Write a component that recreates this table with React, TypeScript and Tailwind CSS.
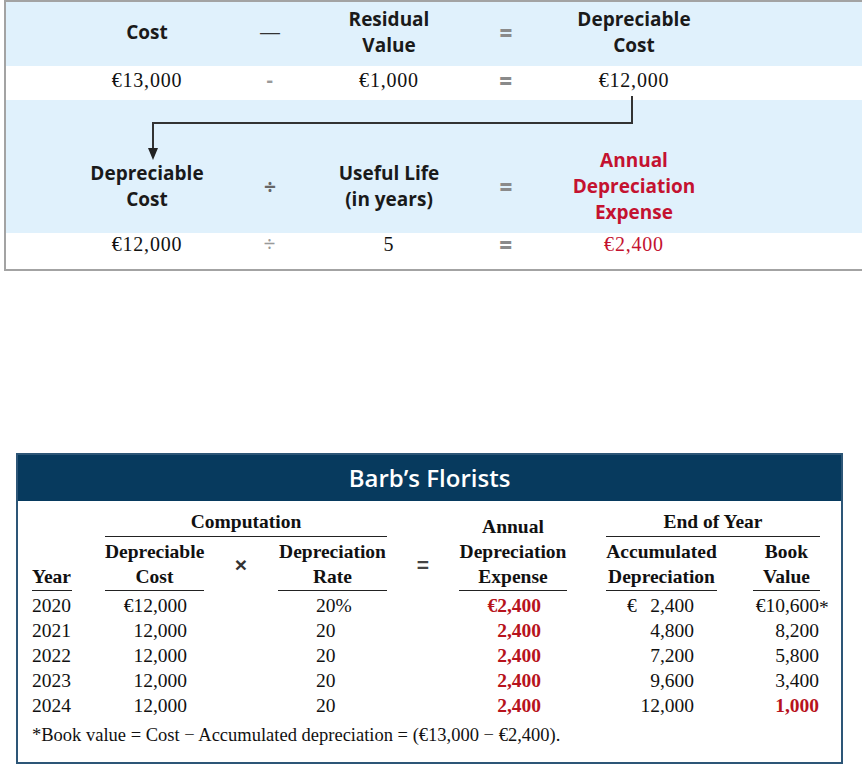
import React from "react";

const sans = "font-['Open_Sans',sans-serif]";
const serif = "font-['Liberation_Serif',serif]";

// top formula box: five centred columns
const topCols = "grid grid-cols-[122px_124px_114px_120px_136px] pl-[80px] text-center";
// bottom schedule columns
const tableCols =
  "grid grid-cols-[40px_33px_99px_74px_109px_72px_108px_39px_111px_36px_67px]";

const eq = `${sans} text-[22px] font-extrabold text-[#8a8a8a]`;

function FormulaBox() {
  return (
    <div className="ml-[4px] border-y-2 border-l-2 border-[#a3a3a3]">
      <div
        className={`${topCols} h-[64px] items-center bg-[#e0f1fc] pb-[4px] ${sans} text-[19px] font-bold leading-[26px] text-[#1a1a1a]`}
      >
        <div>Cost</div>
        <div className="font-['Liberation_Sans',sans-serif] text-[20px] font-normal text-[#333]">—</div>
        <div>
          Residual
          <br />
          Value
        </div>
        <div className={eq}>=</div>
        <div>
          Depreciable
          <br />
          Cost
        </div>
      </div>

      <div
        className={`${topCols} h-[34px] items-start bg-white pt-[3px] ${serif} text-[20px] leading-[22px] tracking-[0.8px] text-[#111]`}
      >
        <div>€13,000</div>
        <div className={`${sans} font-bold text-[#999]`}>-</div>
        <div>€1,000</div>
        <div className={eq}>=</div>
        <div>€12,000</div>
      </div>

      <div className="relative h-[133px] bg-[#e0f1fc] pt-[47px]">
        <svg
          className="absolute left-0 top-[-4px]"
          width="640"
          height="70"
          viewBox="0 0 640 70"
        >
          <polyline
            points="626,0 626,27 147,27 147,54"
            fill="none"
            stroke="#333"
            strokeWidth="2"
          />
          <polygon points="142,52 152,52 147,64" fill="#222" />
        </svg>
        <div
          className={`${topCols} items-center ${sans} text-[19px] font-bold leading-[26px] text-[#1a1a1a]`}
        >
          <div>
            Depreciable
            <br />
            Cost
          </div>
          <div className="text-[21px] text-[#666]">÷</div>
          <div>
            Useful Life
            <br />
            (in years)
          </div>
          <div className={eq}>=</div>
          <div className="text-[#c41230]">
            Annual
            <br />
            Depreciation
            <br />
            Expense
          </div>
        </div>
      </div>

      <div
        className={`${topCols} h-[36px] items-start bg-white ${serif} text-[20px] leading-[22px] tracking-[0.8px] text-[#111]`}
      >
        <div>€12,000</div>
        <div className={`${sans} text-[21px] text-[#999]`}>÷</div>
        <div>5</div>
        <div className={eq}>=</div>
        <div className="text-[#c41230]">€2,400</div>
      </div>
    </div>
  );
}

const rows = [
  { year: "2020", cost: "€12,000", rate: "20%", expense: "€2,400", acc: "2,400", euro: true, book: "€10,600", star: true },
  { year: "2021", cost: "12,000", rate: "20", expense: "2,400", acc: "4,800", euro: false, book: "8,200", star: false },
  { year: "2022", cost: "12,000", rate: "20", expense: "2,400", acc: "7,200", euro: false, book: "5,800", star: false },
  { year: "2023", cost: "12,000", rate: "20", expense: "2,400", acc: "9,600", euro: false, book: "3,400", star: false },
  { year: "2024", cost: "12,000", rate: "20", expense: "2,400", acc: "12,000", euro: false, book: "1,000", star: false },
];

const rule = "border-b-[1.5px] border-[#222]";
const red = "text-[#b7131c]";

function Schedule() {
  return (
    <div className="ml-[16px] mt-[182px] w-[827px] border-2 border-[#2d5677]">
      <div
        className={`flex h-[46px] items-center justify-center bg-[#073a5e] ${sans} text-[24px] font-semibold text-white`}
      >
        Barb’s Florists
      </div>

      <div className={`pl-[14px] pt-[8px] pb-[15px] ${serif} text-[#111]`}>
        <div className={`${tableCols} text-center text-[19.5px] font-bold leading-[25px]`}>
          <div className={`col-start-3 col-end-6 row-start-1 pb-[2px] ${rule}`}>Computation</div>
          <div className={`col-start-7 row-start-1 row-end-3 self-end pb-[1px] ${rule}`}>
            Annual
            <br />
            Depreciation
            <br />
            Expense
          </div>
          <div className={`col-start-9 col-end-12 row-start-1 pb-[2px] ${rule}`}>End of Year</div>

          <div className={`col-start-1 row-start-2 self-end pb-[1px] text-left ${rule}`}>Year</div>
          <div className={`col-start-3 row-start-2 pt-[2px] pb-[1px] ${rule}`}>
            Depreciable
            <br />
            Cost
          </div>
          <div className="col-start-4 row-start-2 self-center font-['Liberation_Sans',sans-serif] text-[21px] font-bold text-[#333]">
            ×
          </div>
          <div className={`col-start-5 row-start-2 pt-[2px] pb-[1px] ${rule}`}>
            Depreciation
            <br />
            Rate
          </div>
          <div className="col-start-6 row-start-2 self-center font-['Liberation_Sans',sans-serif] text-[21px] font-bold text-[#444]">
            =
          </div>
          <div className={`col-start-9 row-start-2 pt-[2px] pb-[1px] ${rule}`}>
            Accumulated
            <br />
            Depreciation
          </div>
          <div className={`col-start-11 row-start-2 pt-[2px] pb-[1px] ${rule}`}>
            Book
            <br />
            Value
          </div>
        </div>

        <div className="pt-[2px] text-[19.5px] leading-[25px]">
          {rows.map((r) => (
            <div key={r.year} className={`${tableCols} h-[25px]`}>
              <div className="col-start-1">{r.year}</div>
              <div className="col-start-3 pr-[17px] text-right">{r.cost}</div>
              <div className="col-start-5 pl-[38px]">{r.rate}</div>
              <div className={`col-start-7 pr-[26px] text-right font-bold ${red}`}>{r.expense}</div>
              <div className="col-start-9 flex justify-between pl-[21px] pr-[23px]">
                <span>{r.euro ? "€" : ""}</span>
                <span>{r.acc}</span>
              </div>
              <div className={`col-start-11 pr-[1px] text-right ${r.year === "2024" ? `font-bold ${red}` : ""}`}>
                <span className="relative">
                  {r.book}
                  {r.star && <span className="absolute left-full top-0">*</span>}
                </span>
              </div>
            </div>
          ))}
        </div>

        <div className="mt-[5px] text-[18.5px] leading-[24px]">
          *Book value = Cost − Accumulated depreciation = (€13,000 − €2,400).
        </div>
      </div>
    </div>
  );
}

export default function App() {
  return (
    <div className="min-h-screen w-[862px] bg-white">
      <FormulaBox />
      <Schedule />
    </div>
  );
}
